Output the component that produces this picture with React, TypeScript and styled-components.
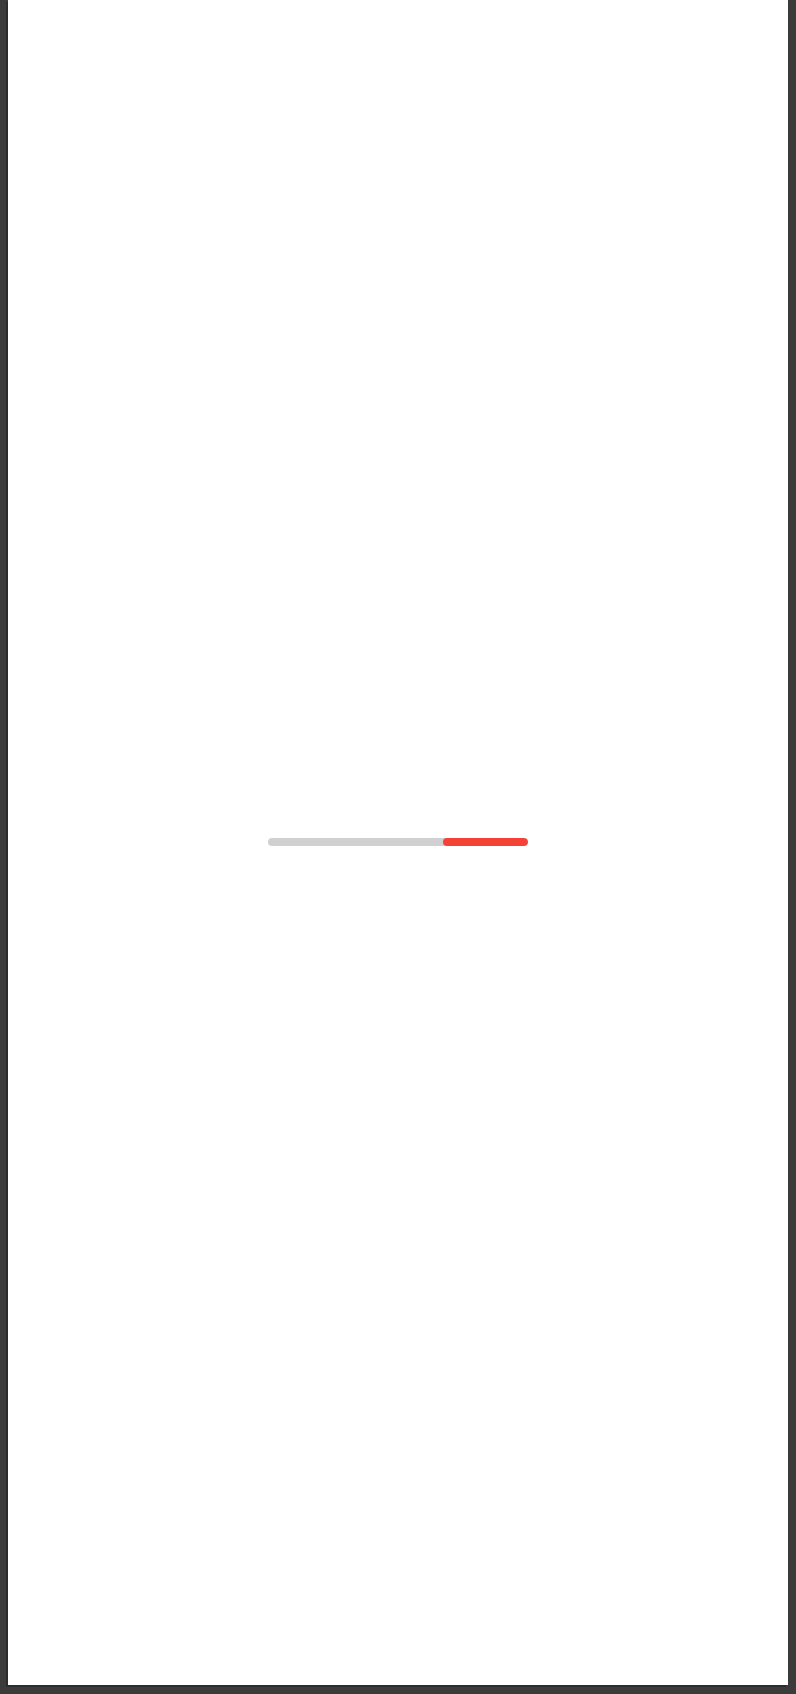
import React from 'react';
import styled, { createGlobalStyle } from 'styled-components';

const GlobalStyle = createGlobalStyle`
  html, body {
    margin: 0;
    padding: 0;
    background: #3b3b3b;
    font-family: "Liberation Sans", Arial, sans-serif;
  }
`;

// 设备外框
const Frame = styled.div`
  width: 796px;
  height: 1694px;
  box-sizing: border-box;
  padding: 0 8px 9px 8px;
  background: #3b3b3b;
`;

const Screen = styled.div`
  height: 100%;
  background: #ffffff;
  box-shadow: -2px 2px 0 #2c2c2c;
  display: flex;
  align-items: center;
  justify-content: center;
  padding-bottom: 1px;
  box-sizing: border-box;
`;

const Track = styled.div`
  width: 260px;
  height: 8px;
  border-radius: 4px;
  background: #d0d0d0;
  display: flex;
  justify-content: flex-end;
  overflow: hidden;
`;

const Fill = styled.div<{ $width: number }>`
  width: ${(p) => p.$width}px;
  height: 100%;
  border-radius: 4px;
  background: #f44336;
`;

const App: React.FC = () => {
  return (
    <>
      <GlobalStyle />
      <Frame>
        <Screen>
          <Track>
            <Fill $width={85} />
          </Track>
        </Screen>
      </Frame>
    </>
  );
};

export default App;
